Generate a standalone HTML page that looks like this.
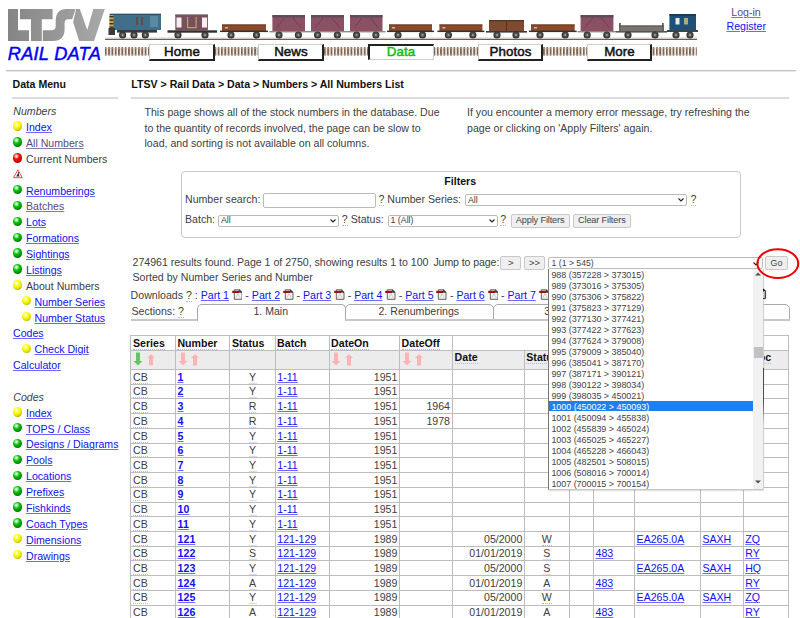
<!DOCTYPE html><html><head><meta charset="utf-8"><style>
html,body{margin:0;padding:0;background:#fff;width:800px;height:618px;overflow:hidden;position:relative;font-family:"Liberation Sans",sans-serif;}
.t{position:absolute;white-space:nowrap;}
.a{color:#1010f0;text-decoration:underline;text-decoration-color:#6a6aff;}
.ab{border-bottom:1px dotted #b4b4f4;}
.abs{position:absolute;}
</style></head><body>
<svg class="abs" style="left:0;top:0" width="110" height="44" viewBox="0 0 110 44">
<defs><linearGradient id="lg" gradientUnits="userSpaceOnUse" x1="8" y1="0" x2="105" y2="0"><stop offset="0" stop-color="#858585"/><stop offset="1" stop-color="#a9a9a9"/></linearGradient></defs>
<g fill="url(#lg)">
<path d="M8,9 H18 V30.3 H29 V41 H8 Z"/>
<path d="M20,9 H52.6 V19.2 H41.8 V41 H31 V19.2 H20 Z"/>
<path d="M42.8,30.3 H51.5 Q55.7,30.3 55.7,26 V21 Q55.7,9 66.4,9 H75.6 L72.2,19.2 H68 Q64.6,19.2 64.6,23 V29 Q64.6,41 53,41 H42.8 Z"/>
<path d="M76.1,9 H79.8 L87.3,30 L93.3,9 H104.8 L94,41 H79.2 L73.1,22 Z"/>
</g></svg>
<div class="t " style="left:7.80px;top:41.54px;font-size:18.2px;line-height:25.48px;font-weight:normal;font-style:italic;color:#0000f0;-webkit-text-stroke:0.45px #0000f0;letter-spacing:0.25px;">RAIL DATA</div>
<svg class="abs" style="left:0;top:0" width="800" height="44"><rect x="105" y="38.5" width="592" height="1.5" fill="#6e5e54"/><rect x="105" y="37.2" width="592" height="1.4" fill="#e6e2de"/><rect x="109.8" y="13.8" width="51.2" height="16.2" fill="#3f6f8a"/><rect x="109.8" y="13.8" width="51.2" height="1.2" fill="#2d5168"/><rect x="109.5" y="15" width="4" height="14" fill="#c9a040"/><rect x="109.5" y="16" width="4" height="1.4" fill="#333"/><rect x="109.5" y="19.5" width="4" height="1.4" fill="#333"/><rect x="109.5" y="23" width="4" height="1.4" fill="#333"/><rect x="109.5" y="26.5" width="4" height="1.4" fill="#333"/><rect x="136" y="17" width="2" height="8" fill="#6a4a40"/><rect x="141" y="17" width="2" height="8" fill="#6a4a40"/><rect x="150" y="16" width="8" height="11" fill="#5a8aa0"/><rect x="117" y="30" width="40" height="2.6" fill="#3a3a3a"/><rect x="108.5" y="28" width="6.5" height="7" fill="#3a3a3a"/><circle cx="122.6" cy="35" r="3.0" fill="#555" stroke="#333" stroke-width="1.2"/><circle cx="122.6" cy="35" r="0.9" fill="#aaa"/><circle cx="134" cy="35" r="3.0" fill="#555" stroke="#333" stroke-width="1.2"/><circle cx="134" cy="35" r="0.9" fill="#aaa"/><circle cx="145.3" cy="35" r="3.0" fill="#555" stroke="#333" stroke-width="1.2"/><circle cx="145.3" cy="35" r="0.9" fill="#aaa"/><rect x="175.3" y="14.6" width="32.6" height="15.7" fill="#7a4f5c"/><rect x="175.3" y="14.6" width="32.6" height="1.6" fill="#6a5a62"/><rect x="176.5" y="17.5" width="5" height="10" fill="#f4f0f0"/><rect x="202" y="17.5" width="5" height="10" fill="#f4f0f0"/><rect x="187" y="17" width="1.2" height="11" fill="#b8a860"/><rect x="195.5" y="17" width="1.2" height="11" fill="#b8a860"/><rect x="187" y="27" width="9.7" height="1.2" fill="#b8a860"/><rect x="167.5" y="30.3" width="49.5" height="2.4" fill="#2e2e2e"/><circle cx="178" cy="35.0" r="3.0" fill="#555" stroke="#333" stroke-width="1.2"/><circle cx="178" cy="35.0" r="0.9" fill="#aaa"/><circle cx="205" cy="35.0" r="3.0" fill="#555" stroke="#333" stroke-width="1.2"/><circle cx="205" cy="35.0" r="0.9" fill="#aaa"/><rect x="222" y="24.5" width="44" height="6.5" fill="#8b4a2c"/><rect x="222" y="24.5" width="44" height="1" fill="#6a3822"/><rect x="225" y="27.0" width="3" height="1.5" fill="#c8b8a8"/><rect x="220" y="30.6" width="48" height="1.5" fill="#2e3438"/><circle cx="231" cy="35.0" r="3.0" fill="#555" stroke="#333" stroke-width="1.2"/><circle cx="231" cy="35.0" r="0.9" fill="#aaa"/><circle cx="256.5" cy="35.0" r="3.0" fill="#555" stroke="#333" stroke-width="1.2"/><circle cx="256.5" cy="35.0" r="0.9" fill="#aaa"/><rect x="272.4" y="15" width="32.60000000000002" height="16" fill="#8b5064"/><rect x="272.4" y="15" width="32.60000000000002" height="2.5" fill="#5e4c5a"/><path d="M276.4,28 L284.4,18 M301,28 L293,18" stroke="#6a3a4a" stroke-width="0.8"/><rect x="269.4" y="31" width="38.60000000000002" height="1.4" fill="#8a8a8a"/><circle cx="279.0" cy="35.0" r="3.0" fill="#555" stroke="#333" stroke-width="1.2"/><circle cx="279.0" cy="35.0" r="0.9" fill="#aaa"/><circle cx="298.4" cy="35.0" r="3.0" fill="#555" stroke="#333" stroke-width="1.2"/><circle cx="298.4" cy="35.0" r="0.9" fill="#aaa"/><rect x="311" y="15" width="33" height="16" fill="#8b5064"/><rect x="311" y="15" width="33" height="2.5" fill="#5e4c5a"/><path d="M315,28 L323,18 M340,28 L332,18" stroke="#6a3a4a" stroke-width="0.8"/><rect x="308" y="31" width="39" height="1.4" fill="#8a8a8a"/><circle cx="317.6" cy="35.0" r="3.0" fill="#555" stroke="#333" stroke-width="1.2"/><circle cx="317.6" cy="35.0" r="0.9" fill="#aaa"/><circle cx="337.4" cy="35.0" r="3.0" fill="#555" stroke="#333" stroke-width="1.2"/><circle cx="337.4" cy="35.0" r="0.9" fill="#aaa"/><rect x="350" y="15" width="32.5" height="16" fill="#8b5064"/><rect x="350" y="15" width="32.5" height="2.5" fill="#5e4c5a"/><path d="M354,28 L362,18 M378.5,28 L370.5,18" stroke="#6a3a4a" stroke-width="0.8"/><rect x="347" y="31" width="38.5" height="1.4" fill="#8a8a8a"/><circle cx="356.6" cy="35.0" r="3.0" fill="#555" stroke="#333" stroke-width="1.2"/><circle cx="356.6" cy="35.0" r="0.9" fill="#aaa"/><circle cx="375.9" cy="35.0" r="3.0" fill="#555" stroke="#333" stroke-width="1.2"/><circle cx="375.9" cy="35.0" r="0.9" fill="#aaa"/><rect x="389" y="24.5" width="43" height="6.5" fill="#8b4a2c"/><rect x="389" y="24.5" width="43" height="1" fill="#6a3822"/><rect x="392" y="27.0" width="3" height="1.5" fill="#c8b8a8"/><rect x="387" y="30.6" width="47" height="1.5" fill="#2e3438"/><circle cx="398" cy="35.0" r="3.0" fill="#555" stroke="#333" stroke-width="1.2"/><circle cx="398" cy="35.0" r="0.9" fill="#aaa"/><circle cx="422.5" cy="35.0" r="3.0" fill="#555" stroke="#333" stroke-width="1.2"/><circle cx="422.5" cy="35.0" r="0.9" fill="#aaa"/><rect x="439.4" y="24.5" width="43.0" height="6.5" fill="#8b4a2c"/><rect x="439.4" y="24.5" width="43.0" height="1" fill="#6a3822"/><rect x="442.4" y="27.0" width="3" height="1.5" fill="#c8b8a8"/><rect x="437.4" y="30.6" width="47.0" height="1.5" fill="#2e3438"/><circle cx="448.4" cy="35.0" r="3.0" fill="#555" stroke="#333" stroke-width="1.2"/><circle cx="448.4" cy="35.0" r="0.9" fill="#aaa"/><circle cx="472.9" cy="35.0" r="3.0" fill="#555" stroke="#333" stroke-width="1.2"/><circle cx="472.9" cy="35.0" r="0.9" fill="#aaa"/><rect x="489" y="20" width="35" height="11" fill="#7e4a30"/><rect x="489" y="20" width="35" height="1.3" fill="#5a3422"/><rect x="506" y="21" width="1" height="10" fill="#5a3422"/><rect x="486" y="31" width="41" height="1.6" fill="#3a3a3a"/><circle cx="497" cy="35.0" r="3.0" fill="#555" stroke="#333" stroke-width="1.2"/><circle cx="497" cy="35.0" r="0.9" fill="#aaa"/><circle cx="516" cy="35.0" r="3.0" fill="#555" stroke="#333" stroke-width="1.2"/><circle cx="516" cy="35.0" r="0.9" fill="#aaa"/><rect x="531" y="24.5" width="43.700000000000045" height="6.5" fill="#8b4a2c"/><rect x="531" y="24.5" width="43.700000000000045" height="1" fill="#6a3822"/><rect x="534" y="27.0" width="3" height="1.5" fill="#c8b8a8"/><rect x="529" y="30.6" width="47.700000000000045" height="1.5" fill="#2e3438"/><circle cx="540" cy="35.0" r="3.0" fill="#555" stroke="#333" stroke-width="1.2"/><circle cx="540" cy="35.0" r="0.9" fill="#aaa"/><circle cx="565.2" cy="35.0" r="3.0" fill="#555" stroke="#333" stroke-width="1.2"/><circle cx="565.2" cy="35.0" r="0.9" fill="#aaa"/><rect x="580.6" y="15" width="32.799999999999955" height="16" fill="#8b5064"/><rect x="580.6" y="15" width="32.799999999999955" height="2.5" fill="#5e4c5a"/><path d="M584.6,28 L592.6,18 M609.4,28 L601.4,18" stroke="#6a3a4a" stroke-width="0.8"/><rect x="577.6" y="31" width="38.799999999999955" height="1.4" fill="#8a8a8a"/><circle cx="587.2" cy="35.0" r="3.0" fill="#555" stroke="#333" stroke-width="1.2"/><circle cx="587.2" cy="35.0" r="0.9" fill="#aaa"/><circle cx="606.8" cy="35.0" r="3.0" fill="#555" stroke="#333" stroke-width="1.2"/><circle cx="606.8" cy="35.0" r="0.9" fill="#aaa"/><rect x="619" y="25.5" width="45" height="5.5" fill="#7a7470"/><rect x="619" y="23" width="1.8" height="8" fill="#6a6460"/><rect x="662" y="23" width="1.8" height="8" fill="#6a6460"/><rect x="619" y="25.5" width="45" height="1" fill="#5a5450"/><rect x="616" y="31" width="51" height="1.6" fill="#555"/><circle cx="628" cy="35.0" r="3.0" fill="#555" stroke="#333" stroke-width="1.2"/><circle cx="628" cy="35.0" r="0.9" fill="#aaa"/><circle cx="655" cy="35.0" r="3.0" fill="#555" stroke="#333" stroke-width="1.2"/><circle cx="655" cy="35.0" r="0.9" fill="#aaa"/><rect x="669.4" y="14" width="26.6" height="16" fill="#1f5078"/><rect x="669.4" y="14" width="26.6" height="1.6" fill="#163a55"/><rect x="675.5" y="18" width="4" height="6.5" fill="#e8e8e8"/><rect x="684" y="18" width="4" height="6.5" fill="#b8a878"/><rect x="667" y="30" width="31" height="2" fill="#444"/><circle cx="676" cy="35.0" r="3.0" fill="#555" stroke="#333" stroke-width="1.2"/><circle cx="676" cy="35.0" r="0.9" fill="#aaa"/><circle cx="690" cy="35.0" r="3.0" fill="#555" stroke="#333" stroke-width="1.2"/><circle cx="690" cy="35.0" r="0.9" fill="#aaa"/></svg>
<svg class="abs" style="left:0;top:40" width="800" height="20">
<defs><pattern id="sl" x="104.8" y="0" width="3.32" height="20" patternUnits="userSpaceOnUse"><rect x="0" y="7" width="1.9" height="8.7" rx="0.8" fill="#7e6450"/></pattern></defs>
<rect x="104.8" y="0" width="592" height="20" fill="url(#sl)"/>
<rect x="104.8" y="8" width="592" height="0.8" fill="#c8b8a8" opacity="0.6"/>
<rect x="104.8" y="14" width="592" height="0.8" fill="#c8b8a8" opacity="0.6"/>
</svg>
<div class="abs" style="left:149px;top:43.8px;width:63px;height:14px;background:#fff;border-top:1px solid #ccc;border-left:1px solid #ccc;border-right:2px solid #222;border-bottom:2px solid #222;"></div>
<div class="t " style="left:182.00px;top:42.67px;font-size:13.3px;line-height:18.62px;font-weight:normal;font-style:normal;color:#111;transform:translateX(-50%);-webkit-text-stroke:0.5px #111;letter-spacing:0.1px;">Home</div>
<div class="abs" style="left:258px;top:43.8px;width:63px;height:14px;background:#fff;border-top:1px solid #ccc;border-left:1px solid #ccc;border-right:2px solid #222;border-bottom:2px solid #222;"></div>
<div class="t " style="left:291.00px;top:42.67px;font-size:13.3px;line-height:18.62px;font-weight:normal;font-style:normal;color:#111;transform:translateX(-50%);-webkit-text-stroke:0.5px #111;letter-spacing:0.1px;">News</div>
<div class="abs" style="left:368px;top:43.5px;width:63px;height:13.6px;background:#fff;border-top:2px solid #222;border-left:2px solid #222;border-right:1px solid #ccc;border-bottom:1px solid #ccc;"></div>
<div class="t " style="left:401.00px;top:42.67px;font-size:13.3px;line-height:18.62px;font-weight:normal;font-style:normal;color:#10c010;transform:translateX(-50%);-webkit-text-stroke:0.5px #10c010;letter-spacing:0.1px;">Data</div>
<div class="abs" style="left:478px;top:43.8px;width:62px;height:14px;background:#fff;border-top:1px solid #ccc;border-left:1px solid #ccc;border-right:2px solid #222;border-bottom:2px solid #222;"></div>
<div class="t " style="left:510.50px;top:42.67px;font-size:13.3px;line-height:18.62px;font-weight:normal;font-style:normal;color:#111;transform:translateX(-50%);-webkit-text-stroke:0.5px #111;letter-spacing:0.1px;">Photos</div>
<div class="abs" style="left:587px;top:43.8px;width:62px;height:14px;background:#fff;border-top:1px solid #ccc;border-left:1px solid #ccc;border-right:2px solid #222;border-bottom:2px solid #222;"></div>
<div class="t " style="left:619.50px;top:42.67px;font-size:13.3px;line-height:18.62px;font-weight:normal;font-style:normal;color:#111;transform:translateX(-50%);-webkit-text-stroke:0.5px #111;letter-spacing:0.1px;">More</div>
<div class="t " style="left:731.30px;top:5.40px;font-size:10.6px;line-height:14.84px;font-weight:normal;font-style:normal;color:#404040;"><span class="a" style="color:#584a80;text-decoration-color:#8a7aa8">Log-in</span></div>
<div class="t " style="left:726.50px;top:19.10px;font-size:10.6px;line-height:14.84px;font-weight:normal;font-style:normal;color:#404040;"><span class="a">Register</span></div>
<div class="abs" style="left:6px;top:70px;width:790px;height:1px;background:#c4c4c4"></div>
<div class="abs" style="left:6px;top:71px;width:790px;height:1px;background:#e8e8e8"></div>
<div class="abs" style="left:12px;top:97px;width:106px;height:2px;background:#dcdcdc"></div>
<div class="abs" style="left:131px;top:97px;width:658px;height:2px;background:#dcdcdc"></div>
<div class="t " style="left:12.50px;top:76.70px;font-size:10.6px;line-height:14.84px;font-weight:bold;font-style:normal;color:#111;">Data Menu</div>
<div class="t " style="left:131.30px;top:76.70px;font-size:10.6px;line-height:14.84px;font-weight:bold;font-style:normal;color:#111;">LTSV &gt; Rail Data &gt; Data &gt; Numbers &gt; All Numbers List</div>
<div class="t " style="left:13.30px;top:104.20px;font-size:10.6px;line-height:14.84px;font-weight:normal;font-style:normal;color:#404040;"><i>Numbers</i></div>
<div class="abs" style="left:12.9px;top:121.47px;width:9.4px;height:9.4px;border-radius:50%;background:radial-gradient(circle at 38% 32%, #fff 0, #ffffb0 10%, #ffff00 35%, #d8d800 65%, #6a6a00 100%)"></div>
<div class="t " style="left:26.00px;top:120.07px;font-size:10.6px;line-height:14.84px;font-weight:normal;font-style:normal;color:#404040;"><span class="a">Index</span></div>
<div class="abs" style="left:12.9px;top:137.34px;width:9.4px;height:9.4px;border-radius:50%;background:radial-gradient(circle at 38% 32%, #fff 0, #b0ffb0 10%, #10c010 35%, #009000 65%, #003000 100%)"></div>
<div class="t " style="left:26.00px;top:135.94px;font-size:10.6px;line-height:14.84px;font-weight:normal;font-style:normal;color:#404040;"><span class="a" style="color:#584a80;text-decoration-color:#8a7aa8">All Numbers</span></div>
<div class="abs" style="left:12.9px;top:153.21px;width:9.4px;height:9.4px;border-radius:50%;background:radial-gradient(circle at 38% 32%, #fff 0, #ffc0c0 10%, #ff0000 35%, #d00000 65%, #500000 100%)"></div>
<div class="t " style="left:26.00px;top:151.81px;font-size:10.6px;line-height:14.84px;font-weight:normal;font-style:normal;color:#404040;">Current Numbers</div>
<svg class="abs" style="left:12.6px;top:168.58px" width="10" height="10" viewBox="0 0 10 10"><path d="M4.9,0.8 L9.3,8.7 H0.5 Z" fill="#fff" stroke="#f03a3a" stroke-width="0.9" stroke-linejoin="round"/><path d="M3.2,7.6 L5.4,3.6 L6.6,7.6 Z" fill="#333"/><circle cx="5.6" cy="3.6" r="0.7" fill="#333"/></svg>
<div class="abs" style="left:12.9px;top:184.95px;width:9.4px;height:9.4px;border-radius:50%;background:radial-gradient(circle at 38% 32%, #fff 0, #b0ffb0 10%, #10c010 35%, #009000 65%, #003000 100%)"></div>
<div class="t " style="left:26.00px;top:183.55px;font-size:10.6px;line-height:14.84px;font-weight:normal;font-style:normal;color:#404040;"><span class="a">Renumberings</span></div>
<div class="abs" style="left:12.9px;top:200.82px;width:9.4px;height:9.4px;border-radius:50%;background:radial-gradient(circle at 38% 32%, #fff 0, #b0ffb0 10%, #10c010 35%, #009000 65%, #003000 100%)"></div>
<div class="t " style="left:26.00px;top:199.42px;font-size:10.6px;line-height:14.84px;font-weight:normal;font-style:normal;color:#404040;"><span class="a" style="color:#584a80;text-decoration-color:#8a7aa8">Batches</span></div>
<div class="abs" style="left:12.9px;top:216.69px;width:9.4px;height:9.4px;border-radius:50%;background:radial-gradient(circle at 38% 32%, #fff 0, #b0ffb0 10%, #10c010 35%, #009000 65%, #003000 100%)"></div>
<div class="t " style="left:26.00px;top:215.29px;font-size:10.6px;line-height:14.84px;font-weight:normal;font-style:normal;color:#404040;"><span class="a">Lots</span></div>
<div class="abs" style="left:12.9px;top:232.56px;width:9.4px;height:9.4px;border-radius:50%;background:radial-gradient(circle at 38% 32%, #fff 0, #b0ffb0 10%, #10c010 35%, #009000 65%, #003000 100%)"></div>
<div class="t " style="left:26.00px;top:231.16px;font-size:10.6px;line-height:14.84px;font-weight:normal;font-style:normal;color:#404040;"><span class="a">Formations</span></div>
<div class="abs" style="left:12.9px;top:248.43px;width:9.4px;height:9.4px;border-radius:50%;background:radial-gradient(circle at 38% 32%, #fff 0, #b0ffb0 10%, #10c010 35%, #009000 65%, #003000 100%)"></div>
<div class="t " style="left:26.00px;top:247.03px;font-size:10.6px;line-height:14.84px;font-weight:normal;font-style:normal;color:#404040;"><span class="a">Sightings</span></div>
<div class="abs" style="left:12.9px;top:264.30px;width:9.4px;height:9.4px;border-radius:50%;background:radial-gradient(circle at 38% 32%, #fff 0, #b0ffb0 10%, #10c010 35%, #009000 65%, #003000 100%)"></div>
<div class="t " style="left:26.00px;top:262.90px;font-size:10.6px;line-height:14.84px;font-weight:normal;font-style:normal;color:#404040;"><span class="a">Listings</span></div>
<div class="abs" style="left:12.9px;top:280.17px;width:9.4px;height:9.4px;border-radius:50%;background:radial-gradient(circle at 38% 32%, #fff 0, #ffffb0 10%, #ffff00 35%, #d8d800 65%, #6a6a00 100%)"></div>
<div class="t " style="left:26.00px;top:278.77px;font-size:10.6px;line-height:14.84px;font-weight:normal;font-style:normal;color:#404040;">About Numbers</div>
<div class="abs" style="left:22px;top:296.04px;width:9.4px;height:9.4px;border-radius:50%;background:radial-gradient(circle at 38% 32%, #fff 0, #ffffb0 10%, #ffff00 35%, #d8d800 65%, #6a6a00 100%)"></div>
<div class="t " style="left:34.50px;top:294.64px;font-size:10.6px;line-height:14.84px;font-weight:normal;font-style:normal;color:#404040;"><span class="a">Number Series</span></div>
<div class="abs" style="left:22px;top:311.91px;width:9.4px;height:9.4px;border-radius:50%;background:radial-gradient(circle at 38% 32%, #fff 0, #ffffb0 10%, #ffff00 35%, #d8d800 65%, #6a6a00 100%)"></div>
<div class="t " style="left:34.50px;top:310.51px;font-size:10.6px;line-height:14.84px;font-weight:normal;font-style:normal;color:#404040;"><span class="a">Number Status</span></div>
<div class="t " style="left:13.00px;top:326.38px;font-size:10.6px;line-height:14.84px;font-weight:normal;font-style:normal;color:#404040;"><span class="a">Codes</span></div>
<div class="abs" style="left:22px;top:343.65px;width:9.4px;height:9.4px;border-radius:50%;background:radial-gradient(circle at 38% 32%, #fff 0, #ffffb0 10%, #ffff00 35%, #d8d800 65%, #6a6a00 100%)"></div>
<div class="t " style="left:34.50px;top:342.25px;font-size:10.6px;line-height:14.84px;font-weight:normal;font-style:normal;color:#404040;"><span class="a">Check Digit</span></div>
<div class="t " style="left:13.00px;top:358.12px;font-size:10.6px;line-height:14.84px;font-weight:normal;font-style:normal;color:#404040;"><span class="a">Calculator</span></div>
<div class="t " style="left:13.30px;top:389.86px;font-size:10.6px;line-height:14.84px;font-weight:normal;font-style:normal;color:#404040;"><i>Codes</i></div>
<div class="abs" style="left:12.9px;top:407.13px;width:9.4px;height:9.4px;border-radius:50%;background:radial-gradient(circle at 38% 32%, #fff 0, #ffffb0 10%, #ffff00 35%, #d8d800 65%, #6a6a00 100%)"></div>
<div class="t " style="left:26.00px;top:405.73px;font-size:10.6px;line-height:14.84px;font-weight:normal;font-style:normal;color:#404040;"><span class="a">Index</span></div>
<div class="abs" style="left:12.9px;top:423.00px;width:9.4px;height:9.4px;border-radius:50%;background:radial-gradient(circle at 38% 32%, #fff 0, #b0ffb0 10%, #10c010 35%, #009000 65%, #003000 100%)"></div>
<div class="t " style="left:26.00px;top:421.60px;font-size:10.6px;line-height:14.84px;font-weight:normal;font-style:normal;color:#404040;"><span class="a">TOPS / Class</span></div>
<div class="abs" style="left:12.9px;top:438.87px;width:9.4px;height:9.4px;border-radius:50%;background:radial-gradient(circle at 38% 32%, #fff 0, #b0ffb0 10%, #10c010 35%, #009000 65%, #003000 100%)"></div>
<div class="t " style="left:26.00px;top:437.47px;font-size:10.6px;line-height:14.84px;font-weight:normal;font-style:normal;color:#404040;"><span class="a">Designs / Diagrams</span></div>
<div class="abs" style="left:12.9px;top:454.74px;width:9.4px;height:9.4px;border-radius:50%;background:radial-gradient(circle at 38% 32%, #fff 0, #b0ffb0 10%, #10c010 35%, #009000 65%, #003000 100%)"></div>
<div class="t " style="left:26.00px;top:453.34px;font-size:10.6px;line-height:14.84px;font-weight:normal;font-style:normal;color:#404040;"><span class="a">Pools</span></div>
<div class="abs" style="left:12.9px;top:470.61px;width:9.4px;height:9.4px;border-radius:50%;background:radial-gradient(circle at 38% 32%, #fff 0, #b0ffb0 10%, #10c010 35%, #009000 65%, #003000 100%)"></div>
<div class="t " style="left:26.00px;top:469.21px;font-size:10.6px;line-height:14.84px;font-weight:normal;font-style:normal;color:#404040;"><span class="a">Locations</span></div>
<div class="abs" style="left:12.9px;top:486.48px;width:9.4px;height:9.4px;border-radius:50%;background:radial-gradient(circle at 38% 32%, #fff 0, #b0ffb0 10%, #10c010 35%, #009000 65%, #003000 100%)"></div>
<div class="t " style="left:26.00px;top:485.08px;font-size:10.6px;line-height:14.84px;font-weight:normal;font-style:normal;color:#404040;"><span class="a">Prefixes</span></div>
<div class="abs" style="left:12.9px;top:502.35px;width:9.4px;height:9.4px;border-radius:50%;background:radial-gradient(circle at 38% 32%, #fff 0, #b0ffb0 10%, #10c010 35%, #009000 65%, #003000 100%)"></div>
<div class="t " style="left:26.00px;top:500.95px;font-size:10.6px;line-height:14.84px;font-weight:normal;font-style:normal;color:#404040;"><span class="a">Fishkinds</span></div>
<div class="abs" style="left:12.9px;top:518.22px;width:9.4px;height:9.4px;border-radius:50%;background:radial-gradient(circle at 38% 32%, #fff 0, #b0ffb0 10%, #10c010 35%, #009000 65%, #003000 100%)"></div>
<div class="t " style="left:26.00px;top:516.82px;font-size:10.6px;line-height:14.84px;font-weight:normal;font-style:normal;color:#404040;"><span class="a">Coach Types</span></div>
<div class="abs" style="left:12.9px;top:534.09px;width:9.4px;height:9.4px;border-radius:50%;background:radial-gradient(circle at 38% 32%, #fff 0, #ffffb0 10%, #ffff00 35%, #d8d800 65%, #6a6a00 100%)"></div>
<div class="t " style="left:26.00px;top:532.69px;font-size:10.6px;line-height:14.84px;font-weight:normal;font-style:normal;color:#404040;"><span class="a">Dimensions</span></div>
<div class="abs" style="left:12.9px;top:549.96px;width:9.4px;height:9.4px;border-radius:50%;background:radial-gradient(circle at 38% 32%, #fff 0, #ffffb0 10%, #ffff00 35%, #d8d800 65%, #6a6a00 100%)"></div>
<div class="t " style="left:26.00px;top:548.56px;font-size:10.6px;line-height:14.84px;font-weight:normal;font-style:normal;color:#404040;"><span class="a">Drawings</span></div>
<div class="t " style="left:144.50px;top:104.70px;font-size:10.6px;line-height:14.84px;font-weight:normal;font-style:normal;color:#404040;">This page shows all of the stock numbers in the database. Due</div>
<div class="t " style="left:144.50px;top:120.55px;font-size:10.6px;line-height:14.84px;font-weight:normal;font-style:normal;color:#404040;">to the quantity of records involved, the page can be slow to</div>
<div class="t " style="left:144.50px;top:136.40px;font-size:10.6px;line-height:14.84px;font-weight:normal;font-style:normal;color:#404040;">load, and sorting is not available on all columns.</div>
<div class="t " style="left:467.00px;top:104.70px;font-size:10.6px;line-height:14.84px;font-weight:normal;font-style:normal;color:#404040;">If you encounter a memory error message, try refreshing the</div>
<div class="t " style="left:467.00px;top:120.55px;font-size:10.6px;line-height:14.84px;font-weight:normal;font-style:normal;color:#404040;">page or clicking on 'Apply Filters' again.</div>
<div class="abs" style="left:180.5px;top:171px;width:558px;height:65px;border:1px solid #c8c8c8;border-radius:4px"></div>
<div class="t " style="left:444.30px;top:173.70px;font-size:10.6px;line-height:14.84px;font-weight:bold;font-style:normal;color:#111;">Filters</div>
<div class="t " style="left:185.00px;top:191.70px;font-size:10.6px;line-height:14.84px;font-weight:normal;font-style:normal;color:#404040;">Number search:</div>
<div class="abs" style="left:262.5px;top:193px;width:111px;height:12.5px;border:1px solid #bbb;border-radius:2px"></div>
<div class="t " style="left:378.50px;top:191.70px;font-size:10.6px;line-height:14.84px;font-weight:normal;font-style:normal;color:#404040;"><span class="ab">?</span> Number Series:</div>
<div class="abs" style="left:465px;top:193.9px;width:220px;height:10.099999999999994px;border:1px solid #bbb;border-radius:2px;background:#fff"></div>
<div class="t " style="left:468.00px;top:193.59px;font-size:8.8px;line-height:12.32px;font-weight:normal;font-style:normal;color:#404040;">All</div>
<svg class="abs" style="left:678px;top:197.9px" width="6" height="4" viewBox="0 0 6 4"><path d="M0.5,0.5 L3,3 L5.5,0.5" fill="none" stroke="#222" stroke-width="1.1"/></svg>
<div class="t " style="left:690.50px;top:191.70px;font-size:10.6px;line-height:14.84px;font-weight:normal;font-style:normal;color:#404040;"><span class="ab">?</span></div>
<div class="t " style="left:185.00px;top:212.40px;font-size:10.6px;line-height:14.84px;font-weight:normal;font-style:normal;color:#404040;">Batch:</div>
<div class="abs" style="left:218px;top:215px;width:119px;height:9.5px;border:1px solid #bbb;border-radius:2px;background:#fff"></div>
<div class="t " style="left:221.00px;top:214.09px;font-size:8.8px;line-height:12.32px;font-weight:normal;font-style:normal;color:#404040;">All</div>
<svg class="abs" style="left:330px;top:218.8px" width="6" height="4" viewBox="0 0 6 4"><path d="M0.5,0.5 L3,3 L5.5,0.5" fill="none" stroke="#222" stroke-width="1.1"/></svg>
<div class="t " style="left:341.80px;top:212.40px;font-size:10.6px;line-height:14.84px;font-weight:normal;font-style:normal;color:#404040;"><span class="ab">?</span> Status:</div>
<div class="abs" style="left:387.5px;top:215px;width:108.0px;height:9.5px;border:1px solid #bbb;border-radius:2px;background:#fff"></div>
<div class="t " style="left:390.50px;top:214.09px;font-size:8.8px;line-height:12.32px;font-weight:normal;font-style:normal;color:#404040;">1 (All)</div>
<svg class="abs" style="left:488.5px;top:218.8px" width="6" height="4" viewBox="0 0 6 4"><path d="M0.5,0.5 L3,3 L5.5,0.5" fill="none" stroke="#222" stroke-width="1.1"/></svg>
<div class="t " style="left:500.30px;top:212.40px;font-size:10.6px;line-height:14.84px;font-weight:normal;font-style:normal;color:#404040;"><span class="ab">?</span></div>
<div class="abs" style="left:510.5px;top:213.5px;width:57.299999999999955px;height:12.0px;border:1px solid #c8c8c8;border-radius:2px;background:#efefef"></div>
<div class="t " style="left:540.15px;top:214.17px;font-size:9.2px;line-height:12.88px;font-weight:normal;font-style:normal;color:#444;transform:translateX(-50%);letter-spacing:-0.15px;">Apply Filters</div>
<div class="abs" style="left:573px;top:213.5px;width:55.60000000000002px;height:12.0px;border:1px solid #c8c8c8;border-radius:2px;background:#efefef"></div>
<div class="t " style="left:601.80px;top:214.17px;font-size:9.2px;line-height:12.88px;font-weight:normal;font-style:normal;color:#444;transform:translateX(-50%);letter-spacing:-0.15px;">Clear Filters</div>
<div class="t " style="left:132.50px;top:254.80px;font-size:10.6px;line-height:14.84px;font-weight:normal;font-style:normal;color:#404040;letter-spacing:-0.015px;">274961 results found. Page 1 of 2750, showing results 1 to 100</div>
<div class="t " style="left:433.40px;top:254.80px;font-size:10.6px;line-height:14.84px;font-weight:normal;font-style:normal;color:#404040;letter-spacing:-0.1px;">Jump to page:</div>
<div class="abs" style="left:500.3px;top:256.2px;width:18.599999999999966px;height:12.199999999999989px;border:1px solid #c8c8c8;border-radius:2px;background:#efefef"></div>
<div class="t " style="left:510.60px;top:256.35px;font-size:9.5px;line-height:13.3px;font-weight:normal;font-style:normal;color:#404040;transform:translateX(-50%);letter-spacing:-0.15px;">&gt;</div>
<div class="abs" style="left:524.3px;top:256.2px;width:18.40000000000009px;height:12.199999999999989px;border:1px solid #c8c8c8;border-radius:2px;background:#efefef"></div>
<div class="t " style="left:534.50px;top:256.35px;font-size:9.5px;line-height:13.3px;font-weight:normal;font-style:normal;color:#404040;transform:translateX(-50%);letter-spacing:-0.15px;">&gt;&gt;</div>
<div class="abs" style="left:548.2px;top:257.3px;width:212.5px;height:9.6px;border:1px solid #bbb;border-radius:2px;background:#fff"></div>
<div class="t " style="left:551.50px;top:256.79px;font-size:8.7px;line-height:12.18px;font-weight:normal;font-style:normal;color:#444;">1 (1 &gt; 545)</div>
<svg class="abs" style="left:753px;top:261.5px" width="6" height="4" viewBox="0 0 6 4"><path d="M0.5,0.5 L3,3 L5.5,0.5" fill="none" stroke="#222" stroke-width="1.1"/></svg>
<div class="abs" style="left:765.3px;top:256.2px;width:20.5px;height:12.199999999999989px;border:1px solid #c8c8c8;border-radius:2px;background:#efefef"></div>
<div class="t " style="left:776.55px;top:256.69px;font-size:8.8px;line-height:12.32px;font-weight:normal;font-style:normal;color:#444;transform:translateX(-50%);letter-spacing:0.1px;">Go</div>
<div class="t " style="left:132.50px;top:270.20px;font-size:10.6px;line-height:14.84px;font-weight:normal;font-style:normal;color:#404040;">Sorted by Number Series and Number</div>
<div class="t " style="left:130.60px;top:287.90px;font-size:10.6px;line-height:14.84px;font-weight:normal;font-style:normal;color:#404040;">Downloads <span class="ab">?</span> : <span class="a">Part 1</span> <svg width="10.5" height="11" viewBox="0 0 10.5 11" style="vertical-align:-1px;margin-left:0px"><path d="M2.3,0.8 H7.6 L10,3.2 V10.3 H2.3 Z" fill="#f4f4f4" stroke="#505050" stroke-width="0.9"/><path d="M7.4,0.8 V3.3 H10" fill="#333" stroke="#333" stroke-width="0.8"/><rect x="0.2" y="1.8" width="7" height="2.2" fill="#a01010"/><path d="M3.8,9 L6,4.5 L8.3,9" fill="none" stroke="#caa" stroke-width="0.6"/></svg> - <span class="a">Part 2</span> <svg width="10.5" height="11" viewBox="0 0 10.5 11" style="vertical-align:-1px;margin-left:0px"><path d="M2.3,0.8 H7.6 L10,3.2 V10.3 H2.3 Z" fill="#f4f4f4" stroke="#505050" stroke-width="0.9"/><path d="M7.4,0.8 V3.3 H10" fill="#333" stroke="#333" stroke-width="0.8"/><rect x="0.2" y="1.8" width="7" height="2.2" fill="#a01010"/><path d="M3.8,9 L6,4.5 L8.3,9" fill="none" stroke="#caa" stroke-width="0.6"/></svg> - <span class="a">Part 3</span> <svg width="10.5" height="11" viewBox="0 0 10.5 11" style="vertical-align:-1px;margin-left:0px"><path d="M2.3,0.8 H7.6 L10,3.2 V10.3 H2.3 Z" fill="#f4f4f4" stroke="#505050" stroke-width="0.9"/><path d="M7.4,0.8 V3.3 H10" fill="#333" stroke="#333" stroke-width="0.8"/><rect x="0.2" y="1.8" width="7" height="2.2" fill="#a01010"/><path d="M3.8,9 L6,4.5 L8.3,9" fill="none" stroke="#caa" stroke-width="0.6"/></svg> - <span class="a">Part 4</span> <svg width="10.5" height="11" viewBox="0 0 10.5 11" style="vertical-align:-1px;margin-left:0px"><path d="M2.3,0.8 H7.6 L10,3.2 V10.3 H2.3 Z" fill="#f4f4f4" stroke="#505050" stroke-width="0.9"/><path d="M7.4,0.8 V3.3 H10" fill="#333" stroke="#333" stroke-width="0.8"/><rect x="0.2" y="1.8" width="7" height="2.2" fill="#a01010"/><path d="M3.8,9 L6,4.5 L8.3,9" fill="none" stroke="#caa" stroke-width="0.6"/></svg> - <span class="a">Part 5</span> <svg width="10.5" height="11" viewBox="0 0 10.5 11" style="vertical-align:-1px;margin-left:0px"><path d="M2.3,0.8 H7.6 L10,3.2 V10.3 H2.3 Z" fill="#f4f4f4" stroke="#505050" stroke-width="0.9"/><path d="M7.4,0.8 V3.3 H10" fill="#333" stroke="#333" stroke-width="0.8"/><rect x="0.2" y="1.8" width="7" height="2.2" fill="#a01010"/><path d="M3.8,9 L6,4.5 L8.3,9" fill="none" stroke="#caa" stroke-width="0.6"/></svg> - <span class="a">Part 6</span> <svg width="10.5" height="11" viewBox="0 0 10.5 11" style="vertical-align:-1px;margin-left:0px"><path d="M2.3,0.8 H7.6 L10,3.2 V10.3 H2.3 Z" fill="#f4f4f4" stroke="#505050" stroke-width="0.9"/><path d="M7.4,0.8 V3.3 H10" fill="#333" stroke="#333" stroke-width="0.8"/><rect x="0.2" y="1.8" width="7" height="2.2" fill="#a01010"/><path d="M3.8,9 L6,4.5 L8.3,9" fill="none" stroke="#caa" stroke-width="0.6"/></svg> - <span class="a">Part 7</span> <svg width="10.5" height="11" viewBox="0 0 10.5 11" style="vertical-align:-1px;margin-left:0px"><path d="M2.3,0.8 H7.6 L10,3.2 V10.3 H2.3 Z" fill="#f4f4f4" stroke="#505050" stroke-width="0.9"/><path d="M7.4,0.8 V3.3 H10" fill="#333" stroke="#333" stroke-width="0.8"/><rect x="0.2" y="1.8" width="7" height="2.2" fill="#a01010"/><path d="M3.8,9 L6,4.5 L8.3,9" fill="none" stroke="#caa" stroke-width="0.6"/></svg> - <span class="a">Part 8</span> <svg width="10.5" height="11" viewBox="0 0 10.5 11" style="vertical-align:-1px;margin-left:0px"><path d="M2.3,0.8 H7.6 L10,3.2 V10.3 H2.3 Z" fill="#f4f4f4" stroke="#505050" stroke-width="0.9"/><path d="M7.4,0.8 V3.3 H10" fill="#333" stroke="#333" stroke-width="0.8"/><rect x="0.2" y="1.8" width="7" height="2.2" fill="#a01010"/><path d="M3.8,9 L6,4.5 L8.3,9" fill="none" stroke="#caa" stroke-width="0.6"/></svg> - <span class="a">Part 9</span> <svg width="10.5" height="11" viewBox="0 0 10.5 11" style="vertical-align:-1px;margin-left:0px"><path d="M2.3,0.8 H7.6 L10,3.2 V10.3 H2.3 Z" fill="#f4f4f4" stroke="#505050" stroke-width="0.9"/><path d="M7.4,0.8 V3.3 H10" fill="#333" stroke="#333" stroke-width="0.8"/><rect x="0.2" y="1.8" width="7" height="2.2" fill="#a01010"/><path d="M3.8,9 L6,4.5 L8.3,9" fill="none" stroke="#caa" stroke-width="0.6"/></svg> - <span class="a">Part 10</span> <svg width="10.5" height="11" viewBox="0 0 10.5 11" style="vertical-align:-1px;margin-left:0px"><path d="M2.3,0.8 H7.6 L10,3.2 V10.3 H2.3 Z" fill="#f4f4f4" stroke="#505050" stroke-width="0.9"/><path d="M7.4,0.8 V3.3 H10" fill="#333" stroke="#333" stroke-width="0.8"/><rect x="0.2" y="1.8" width="7" height="2.2" fill="#a01010"/><path d="M3.8,9 L6,4.5 L8.3,9" fill="none" stroke="#caa" stroke-width="0.6"/></svg> - <span class="a">Part 11</span> <svg width="10.5" height="11" viewBox="0 0 10.5 11" style="vertical-align:-1px;margin-left:0px"><path d="M2.3,0.8 H7.6 L10,3.2 V10.3 H2.3 Z" fill="#f4f4f4" stroke="#505050" stroke-width="0.9"/><path d="M7.4,0.8 V3.3 H10" fill="#333" stroke="#333" stroke-width="0.8"/><rect x="0.2" y="1.8" width="7" height="2.2" fill="#a01010"/><path d="M3.8,9 L6,4.5 L8.3,9" fill="none" stroke="#caa" stroke-width="0.6"/></svg></div>
<div class="t " style="left:131.50px;top:304.10px;font-size:10.6px;line-height:14.84px;font-weight:normal;font-style:normal;color:#404040;">Sections: <span class="ab">?</span></div>
<div class="abs" style="left:131px;top:319.3px;width:66px;height:1.5px;background:#c8c8c8"></div>
<div class="abs" style="left:196.5px;top:303.5px;width:147.5px;height:16px;border:1px solid #a8a8a8;border-radius:5px 5px 0 0;border-bottom:none;background:#fff"></div>
<div class="t " style="left:270.75px;top:304.10px;font-size:10.6px;line-height:14.84px;font-weight:normal;font-style:normal;color:#404040;transform:translateX(-50%);">1. Main</div>
<div class="abs" style="left:345px;top:303.5px;width:146.60000000000002px;height:15px;border:1px solid #a8a8a8;border-radius:5px 5px 0 0;background:#fff"></div>
<div class="abs" style="left:345px;top:319.3px;width:148.60000000000002px;height:1.5px;background:#c8c8c8"></div>
<div class="t " style="left:418.80px;top:304.10px;font-size:10.6px;line-height:14.84px;font-weight:normal;font-style:normal;color:#404040;transform:translateX(-50%);">2. Renumberings</div>
<div class="abs" style="left:492.6px;top:303.5px;width:295.6px;height:15px;border:1px solid #a8a8a8;border-radius:5px 5px 0 0;background:#fff"></div>
<div class="abs" style="left:492.6px;top:319.3px;width:297.6px;height:1.5px;background:#c8c8c8"></div>
<div class="t " style="left:544.20px;top:304.10px;font-size:10.6px;line-height:14.84px;font-weight:normal;font-style:normal;color:#404040;">3. Other</div>
<div class="abs" style="left:130px;top:350px;width:659px;height:19px;background:#ececec"></div>
<div class="abs" style="left:130px;top:335px;width:659px;height:1px;background:#bdbdbd"></div>
<div class="abs" style="left:130px;top:350px;width:659px;height:1px;background:#bdbdbd"></div>
<div class="abs" style="left:130px;top:369px;width:659px;height:1px;background:#bdbdbd"></div>
<div class="abs" style="left:130px;top:384px;width:659px;height:1px;background:#bdbdbd"></div>
<div class="abs" style="left:130px;top:398px;width:659px;height:1px;background:#bdbdbd"></div>
<div class="abs" style="left:130px;top:413px;width:659px;height:1px;background:#bdbdbd"></div>
<div class="abs" style="left:130px;top:428px;width:659px;height:1px;background:#bdbdbd"></div>
<div class="abs" style="left:130px;top:443px;width:659px;height:1px;background:#bdbdbd"></div>
<div class="abs" style="left:130px;top:457px;width:659px;height:1px;background:#bdbdbd"></div>
<div class="abs" style="left:130px;top:472px;width:659px;height:1px;background:#bdbdbd"></div>
<div class="abs" style="left:130px;top:487px;width:659px;height:1px;background:#bdbdbd"></div>
<div class="abs" style="left:130px;top:502px;width:659px;height:1px;background:#bdbdbd"></div>
<div class="abs" style="left:130px;top:516px;width:659px;height:1px;background:#bdbdbd"></div>
<div class="abs" style="left:130px;top:531px;width:659px;height:1px;background:#bdbdbd"></div>
<div class="abs" style="left:130px;top:546px;width:659px;height:1px;background:#bdbdbd"></div>
<div class="abs" style="left:130px;top:560px;width:659px;height:1px;background:#bdbdbd"></div>
<div class="abs" style="left:130px;top:575px;width:659px;height:1px;background:#bdbdbd"></div>
<div class="abs" style="left:130px;top:590px;width:659px;height:1px;background:#bdbdbd"></div>
<div class="abs" style="left:130px;top:605px;width:659px;height:1px;background:#bdbdbd"></div>
<div class="abs" style="left:130px;top:619px;width:659px;height:1px;background:#bdbdbd"></div>
<div class="abs" style="left:130px;top:335px;width:1px;height:283px;background:#bdbdbd"></div>
<div class="abs" style="left:175px;top:335px;width:1px;height:283px;background:#bdbdbd"></div>
<div class="abs" style="left:229px;top:335px;width:1px;height:283px;background:#bdbdbd"></div>
<div class="abs" style="left:275px;top:335px;width:1px;height:283px;background:#bdbdbd"></div>
<div class="abs" style="left:329px;top:335px;width:1px;height:283px;background:#bdbdbd"></div>
<div class="abs" style="left:399px;top:335px;width:1px;height:283px;background:#bdbdbd"></div>
<div class="abs" style="left:452px;top:335px;width:1px;height:283px;background:#bdbdbd"></div>
<div class="abs" style="left:524px;top:350px;width:1px;height:268px;background:#bdbdbd"></div>
<div class="abs" style="left:569px;top:350px;width:1px;height:268px;background:#bdbdbd"></div>
<div class="abs" style="left:593px;top:350px;width:1px;height:268px;background:#bdbdbd"></div>
<div class="abs" style="left:634px;top:350px;width:1px;height:268px;background:#bdbdbd"></div>
<div class="abs" style="left:700px;top:350px;width:1px;height:268px;background:#bdbdbd"></div>
<div class="abs" style="left:743px;top:350px;width:1px;height:268px;background:#bdbdbd"></div>
<div class="abs" style="left:788px;top:335px;width:1px;height:283px;background:#bdbdbd"></div>
<div class="t " style="left:133.00px;top:335.60px;font-size:10.6px;line-height:14.84px;font-weight:bold;font-style:normal;color:#111;"><span class="ab">Series</span></div>
<div class="t " style="left:177.40px;top:335.60px;font-size:10.6px;line-height:14.84px;font-weight:bold;font-style:normal;color:#111;"><span class="ab">Number</span></div>
<div class="t " style="left:232.00px;top:335.60px;font-size:10.6px;line-height:14.84px;font-weight:bold;font-style:normal;color:#111;"><span class="ab">Status</span></div>
<div class="t " style="left:277.10px;top:335.60px;font-size:10.6px;line-height:14.84px;font-weight:bold;font-style:normal;color:#111;"><span class="ab">Batch</span></div>
<div class="t " style="left:331.10px;top:335.60px;font-size:10.6px;line-height:14.84px;font-weight:bold;font-style:normal;color:#111;"><span class="ab">DateOn</span></div>
<div class="t " style="left:401.60px;top:335.60px;font-size:10.6px;line-height:14.84px;font-weight:bold;font-style:normal;color:#111;"><span class="ab">DateOff</span></div>
<div class="t " style="left:454.60px;top:350.40px;font-size:10.6px;line-height:14.84px;font-weight:bold;font-style:normal;color:#111;"><span class="ab">Date</span></div>
<div class="t " style="left:526.30px;top:350.40px;font-size:10.6px;line-height:14.84px;font-weight:bold;font-style:normal;color:#111;"><span class="ab">Status</span></div>
<div class="t " style="left:571.30px;top:350.40px;font-size:10.6px;line-height:14.84px;font-weight:bold;font-style:normal;color:#111;"><span class="ab">Livery</span></div>
<div class="t " style="left:596.00px;top:350.40px;font-size:10.6px;line-height:14.84px;font-weight:bold;font-style:normal;color:#111;"><span class="ab">Pool</span></div>
<div class="t " style="left:636.60px;top:350.40px;font-size:10.6px;line-height:14.84px;font-weight:bold;font-style:normal;color:#111;"><span class="ab">Design</span></div>
<div class="t " style="left:702.40px;top:350.40px;font-size:10.6px;line-height:14.84px;font-weight:bold;font-style:normal;color:#111;"><span class="ab">TOPS</span></div>
<div class="t " style="left:745.20px;top:350.40px;font-size:10.6px;line-height:14.84px;font-weight:bold;font-style:normal;color:#111;"><span class="ab">Alloc</span></div>
<svg class="abs" style="left:133.3px;top:352px" width="10" height="14" viewBox="0 0 10 14"><path d="M3,0.5 H7 V9 H9.5 L5,13.5 L0.5,9 H3 Z" fill="#66c466"/></svg>
<svg class="abs" style="left:146.8px;top:353.5px" width="9" height="12" viewBox="0 0 9 12"><path d="M4,0 L8,4 H6 V11.5 H2 V4 H0 Z" fill="#ffb4b4"/></svg>
<svg class="abs" style="left:177.70000000000002px;top:352px" width="10" height="14" viewBox="0 0 10 14"><path d="M3,0.5 H7 V9 H9.5 L5,13.5 L0.5,9 H3 Z" fill="#ffb4b4"/></svg>
<svg class="abs" style="left:191.20000000000002px;top:353.5px" width="9" height="12" viewBox="0 0 9 12"><path d="M4,0 L8,4 H6 V11.5 H2 V4 H0 Z" fill="#ffb4b4"/></svg>
<svg class="abs" style="left:331.40000000000003px;top:352px" width="10" height="14" viewBox="0 0 10 14"><path d="M3,0.5 H7 V9 H9.5 L5,13.5 L0.5,9 H3 Z" fill="#ffb4b4"/></svg>
<svg class="abs" style="left:344.90000000000003px;top:353.5px" width="9" height="12" viewBox="0 0 9 12"><path d="M4,0 L8,4 H6 V11.5 H2 V4 H0 Z" fill="#ffb4b4"/></svg>
<svg class="abs" style="left:401.90000000000003px;top:352px" width="10" height="14" viewBox="0 0 10 14"><path d="M3,0.5 H7 V9 H9.5 L5,13.5 L0.5,9 H3 Z" fill="#ffb4b4"/></svg>
<svg class="abs" style="left:415.40000000000003px;top:353.5px" width="9" height="12" viewBox="0 0 9 12"><path d="M4,0 L8,4 H6 V11.5 H2 V4 H0 Z" fill="#ffb4b4"/></svg>
<div class="t " style="left:133.00px;top:369.60px;font-size:10.6px;line-height:14.84px;font-weight:normal;font-style:normal;color:#404040;"><span class="ab">CB</span></div>
<div class="t " style="left:177.60px;top:369.60px;font-size:10.6px;line-height:14.84px;font-weight:normal;font-style:normal;color:#404040;"><span class="a" style="font-weight:bold">1</span></div>
<div class="t " style="left:252.55px;top:369.60px;font-size:10.6px;line-height:14.84px;font-weight:normal;font-style:normal;color:#404040;transform:translateX(-50%);"><span class="ab">Y</span></div>
<div class="t " style="left:277.30px;top:369.60px;font-size:10.6px;line-height:14.84px;font-weight:normal;font-style:normal;color:#404040;"><span class="a">1-11</span></div>
<div class="t " style="left:397.40px;top:369.60px;font-size:10.6px;line-height:14.84px;font-weight:normal;font-style:normal;color:#404040;transform:translateX(-100%);">1951</div>
<div class="t " style="left:133.00px;top:384.33px;font-size:10.6px;line-height:14.84px;font-weight:normal;font-style:normal;color:#404040;"><span class="ab">CB</span></div>
<div class="t " style="left:177.60px;top:384.33px;font-size:10.6px;line-height:14.84px;font-weight:normal;font-style:normal;color:#404040;"><span class="a" style="font-weight:bold">2</span></div>
<div class="t " style="left:252.55px;top:384.33px;font-size:10.6px;line-height:14.84px;font-weight:normal;font-style:normal;color:#404040;transform:translateX(-50%);"><span class="ab">Y</span></div>
<div class="t " style="left:277.30px;top:384.33px;font-size:10.6px;line-height:14.84px;font-weight:normal;font-style:normal;color:#404040;"><span class="a">1-11</span></div>
<div class="t " style="left:397.40px;top:384.33px;font-size:10.6px;line-height:14.84px;font-weight:normal;font-style:normal;color:#404040;transform:translateX(-100%);">1951</div>
<div class="t " style="left:133.00px;top:399.05px;font-size:10.6px;line-height:14.84px;font-weight:normal;font-style:normal;color:#404040;"><span class="ab">CB</span></div>
<div class="t " style="left:177.60px;top:399.05px;font-size:10.6px;line-height:14.84px;font-weight:normal;font-style:normal;color:#404040;"><span class="a" style="font-weight:bold">3</span></div>
<div class="t " style="left:252.55px;top:399.05px;font-size:10.6px;line-height:14.84px;font-weight:normal;font-style:normal;color:#404040;transform:translateX(-50%);"><span class="ab">R</span></div>
<div class="t " style="left:277.30px;top:399.05px;font-size:10.6px;line-height:14.84px;font-weight:normal;font-style:normal;color:#404040;"><span class="a">1-11</span></div>
<div class="t " style="left:397.40px;top:399.05px;font-size:10.6px;line-height:14.84px;font-weight:normal;font-style:normal;color:#404040;transform:translateX(-100%);">1951</div>
<div class="t " style="left:450.00px;top:399.05px;font-size:10.6px;line-height:14.84px;font-weight:normal;font-style:normal;color:#404040;transform:translateX(-100%);">1964</div>
<div class="t " style="left:133.00px;top:413.78px;font-size:10.6px;line-height:14.84px;font-weight:normal;font-style:normal;color:#404040;"><span class="ab">CB</span></div>
<div class="t " style="left:177.60px;top:413.78px;font-size:10.6px;line-height:14.84px;font-weight:normal;font-style:normal;color:#404040;"><span class="a" style="font-weight:bold">4</span></div>
<div class="t " style="left:252.55px;top:413.78px;font-size:10.6px;line-height:14.84px;font-weight:normal;font-style:normal;color:#404040;transform:translateX(-50%);"><span class="ab">R</span></div>
<div class="t " style="left:277.30px;top:413.78px;font-size:10.6px;line-height:14.84px;font-weight:normal;font-style:normal;color:#404040;"><span class="a">1-11</span></div>
<div class="t " style="left:397.40px;top:413.78px;font-size:10.6px;line-height:14.84px;font-weight:normal;font-style:normal;color:#404040;transform:translateX(-100%);">1951</div>
<div class="t " style="left:450.00px;top:413.78px;font-size:10.6px;line-height:14.84px;font-weight:normal;font-style:normal;color:#404040;transform:translateX(-100%);">1978</div>
<div class="t " style="left:133.00px;top:428.50px;font-size:10.6px;line-height:14.84px;font-weight:normal;font-style:normal;color:#404040;"><span class="ab">CB</span></div>
<div class="t " style="left:177.60px;top:428.50px;font-size:10.6px;line-height:14.84px;font-weight:normal;font-style:normal;color:#404040;"><span class="a" style="font-weight:bold">5</span></div>
<div class="t " style="left:252.55px;top:428.50px;font-size:10.6px;line-height:14.84px;font-weight:normal;font-style:normal;color:#404040;transform:translateX(-50%);"><span class="ab">Y</span></div>
<div class="t " style="left:277.30px;top:428.50px;font-size:10.6px;line-height:14.84px;font-weight:normal;font-style:normal;color:#404040;"><span class="a">1-11</span></div>
<div class="t " style="left:397.40px;top:428.50px;font-size:10.6px;line-height:14.84px;font-weight:normal;font-style:normal;color:#404040;transform:translateX(-100%);">1951</div>
<div class="t " style="left:133.00px;top:443.23px;font-size:10.6px;line-height:14.84px;font-weight:normal;font-style:normal;color:#404040;"><span class="ab">CB</span></div>
<div class="t " style="left:177.60px;top:443.23px;font-size:10.6px;line-height:14.84px;font-weight:normal;font-style:normal;color:#404040;"><span class="a" style="font-weight:bold">6</span></div>
<div class="t " style="left:252.55px;top:443.23px;font-size:10.6px;line-height:14.84px;font-weight:normal;font-style:normal;color:#404040;transform:translateX(-50%);"><span class="ab">Y</span></div>
<div class="t " style="left:277.30px;top:443.23px;font-size:10.6px;line-height:14.84px;font-weight:normal;font-style:normal;color:#404040;"><span class="a">1-11</span></div>
<div class="t " style="left:397.40px;top:443.23px;font-size:10.6px;line-height:14.84px;font-weight:normal;font-style:normal;color:#404040;transform:translateX(-100%);">1951</div>
<div class="t " style="left:133.00px;top:457.95px;font-size:10.6px;line-height:14.84px;font-weight:normal;font-style:normal;color:#404040;"><span class="ab">CB</span></div>
<div class="t " style="left:177.60px;top:457.95px;font-size:10.6px;line-height:14.84px;font-weight:normal;font-style:normal;color:#404040;"><span class="a" style="font-weight:bold">7</span></div>
<div class="t " style="left:252.55px;top:457.95px;font-size:10.6px;line-height:14.84px;font-weight:normal;font-style:normal;color:#404040;transform:translateX(-50%);"><span class="ab">Y</span></div>
<div class="t " style="left:277.30px;top:457.95px;font-size:10.6px;line-height:14.84px;font-weight:normal;font-style:normal;color:#404040;"><span class="a">1-11</span></div>
<div class="t " style="left:397.40px;top:457.95px;font-size:10.6px;line-height:14.84px;font-weight:normal;font-style:normal;color:#404040;transform:translateX(-100%);">1951</div>
<div class="t " style="left:133.00px;top:472.68px;font-size:10.6px;line-height:14.84px;font-weight:normal;font-style:normal;color:#404040;"><span class="ab">CB</span></div>
<div class="t " style="left:177.60px;top:472.68px;font-size:10.6px;line-height:14.84px;font-weight:normal;font-style:normal;color:#404040;"><span class="a" style="font-weight:bold">8</span></div>
<div class="t " style="left:252.55px;top:472.68px;font-size:10.6px;line-height:14.84px;font-weight:normal;font-style:normal;color:#404040;transform:translateX(-50%);"><span class="ab">Y</span></div>
<div class="t " style="left:277.30px;top:472.68px;font-size:10.6px;line-height:14.84px;font-weight:normal;font-style:normal;color:#404040;"><span class="a">1-11</span></div>
<div class="t " style="left:397.40px;top:472.68px;font-size:10.6px;line-height:14.84px;font-weight:normal;font-style:normal;color:#404040;transform:translateX(-100%);">1951</div>
<div class="t " style="left:133.00px;top:487.40px;font-size:10.6px;line-height:14.84px;font-weight:normal;font-style:normal;color:#404040;"><span class="ab">CB</span></div>
<div class="t " style="left:177.60px;top:487.40px;font-size:10.6px;line-height:14.84px;font-weight:normal;font-style:normal;color:#404040;"><span class="a" style="font-weight:bold">9</span></div>
<div class="t " style="left:252.55px;top:487.40px;font-size:10.6px;line-height:14.84px;font-weight:normal;font-style:normal;color:#404040;transform:translateX(-50%);"><span class="ab">Y</span></div>
<div class="t " style="left:277.30px;top:487.40px;font-size:10.6px;line-height:14.84px;font-weight:normal;font-style:normal;color:#404040;"><span class="a">1-11</span></div>
<div class="t " style="left:397.40px;top:487.40px;font-size:10.6px;line-height:14.84px;font-weight:normal;font-style:normal;color:#404040;transform:translateX(-100%);">1951</div>
<div class="t " style="left:133.00px;top:502.13px;font-size:10.6px;line-height:14.84px;font-weight:normal;font-style:normal;color:#404040;"><span class="ab">CB</span></div>
<div class="t " style="left:177.60px;top:502.13px;font-size:10.6px;line-height:14.84px;font-weight:normal;font-style:normal;color:#404040;"><span class="a" style="font-weight:bold">10</span></div>
<div class="t " style="left:252.55px;top:502.13px;font-size:10.6px;line-height:14.84px;font-weight:normal;font-style:normal;color:#404040;transform:translateX(-50%);"><span class="ab">Y</span></div>
<div class="t " style="left:277.30px;top:502.13px;font-size:10.6px;line-height:14.84px;font-weight:normal;font-style:normal;color:#404040;"><span class="a">1-11</span></div>
<div class="t " style="left:397.40px;top:502.13px;font-size:10.6px;line-height:14.84px;font-weight:normal;font-style:normal;color:#404040;transform:translateX(-100%);">1951</div>
<div class="t " style="left:133.00px;top:516.85px;font-size:10.6px;line-height:14.84px;font-weight:normal;font-style:normal;color:#404040;"><span class="ab">CB</span></div>
<div class="t " style="left:177.60px;top:516.85px;font-size:10.6px;line-height:14.84px;font-weight:normal;font-style:normal;color:#404040;"><span class="a" style="font-weight:bold">11</span></div>
<div class="t " style="left:252.55px;top:516.85px;font-size:10.6px;line-height:14.84px;font-weight:normal;font-style:normal;color:#404040;transform:translateX(-50%);"><span class="ab">Y</span></div>
<div class="t " style="left:277.30px;top:516.85px;font-size:10.6px;line-height:14.84px;font-weight:normal;font-style:normal;color:#404040;"><span class="a">1-11</span></div>
<div class="t " style="left:397.40px;top:516.85px;font-size:10.6px;line-height:14.84px;font-weight:normal;font-style:normal;color:#404040;transform:translateX(-100%);">1951</div>
<div class="t " style="left:133.00px;top:531.58px;font-size:10.6px;line-height:14.84px;font-weight:normal;font-style:normal;color:#404040;"><span class="ab">CB</span></div>
<div class="t " style="left:177.60px;top:531.58px;font-size:10.6px;line-height:14.84px;font-weight:normal;font-style:normal;color:#404040;"><span class="a" style="font-weight:bold">121</span></div>
<div class="t " style="left:252.55px;top:531.58px;font-size:10.6px;line-height:14.84px;font-weight:normal;font-style:normal;color:#404040;transform:translateX(-50%);"><span class="ab">Y</span></div>
<div class="t " style="left:277.30px;top:531.58px;font-size:10.6px;line-height:14.84px;font-weight:normal;font-style:normal;color:#404040;"><span class="a">121-129</span></div>
<div class="t " style="left:397.40px;top:531.58px;font-size:10.6px;line-height:14.84px;font-weight:normal;font-style:normal;color:#404040;transform:translateX(-100%);">1989</div>
<div class="t " style="left:522.30px;top:531.58px;font-size:10.6px;line-height:14.84px;font-weight:normal;font-style:normal;color:#404040;transform:translateX(-100%);">05/2000</div>
<div class="t " style="left:546.80px;top:531.58px;font-size:10.6px;line-height:14.84px;font-weight:normal;font-style:normal;color:#404040;transform:translateX(-50%);"><span class="ab">W</span></div>
<div class="t " style="left:636.60px;top:531.58px;font-size:10.6px;line-height:14.84px;font-weight:normal;font-style:normal;color:#404040;"><span class="a">EA265.0A</span></div>
<div class="t " style="left:702.40px;top:531.58px;font-size:10.6px;line-height:14.84px;font-weight:normal;font-style:normal;color:#404040;"><span class="a">SAXH</span></div>
<div class="t " style="left:745.20px;top:531.58px;font-size:10.6px;line-height:14.84px;font-weight:normal;font-style:normal;color:#404040;"><span class="a">ZQ</span></div>
<div class="t " style="left:133.00px;top:546.30px;font-size:10.6px;line-height:14.84px;font-weight:normal;font-style:normal;color:#404040;"><span class="ab">CB</span></div>
<div class="t " style="left:177.60px;top:546.30px;font-size:10.6px;line-height:14.84px;font-weight:normal;font-style:normal;color:#404040;"><span class="a" style="font-weight:bold">122</span></div>
<div class="t " style="left:252.55px;top:546.30px;font-size:10.6px;line-height:14.84px;font-weight:normal;font-style:normal;color:#404040;transform:translateX(-50%);"><span class="ab">S</span></div>
<div class="t " style="left:277.30px;top:546.30px;font-size:10.6px;line-height:14.84px;font-weight:normal;font-style:normal;color:#404040;"><span class="a">121-129</span></div>
<div class="t " style="left:397.40px;top:546.30px;font-size:10.6px;line-height:14.84px;font-weight:normal;font-style:normal;color:#404040;transform:translateX(-100%);">1989</div>
<div class="t " style="left:522.30px;top:546.30px;font-size:10.6px;line-height:14.84px;font-weight:normal;font-style:normal;color:#404040;transform:translateX(-100%);">01/01/2019</div>
<div class="t " style="left:546.80px;top:546.30px;font-size:10.6px;line-height:14.84px;font-weight:normal;font-style:normal;color:#404040;transform:translateX(-50%);"><span class="ab">S</span></div>
<div class="t " style="left:595.50px;top:546.30px;font-size:10.6px;line-height:14.84px;font-weight:normal;font-style:normal;color:#404040;"><span class="a">483</span></div>
<div class="t " style="left:745.20px;top:546.30px;font-size:10.6px;line-height:14.84px;font-weight:normal;font-style:normal;color:#404040;"><span class="a">RY</span></div>
<div class="t " style="left:133.00px;top:561.03px;font-size:10.6px;line-height:14.84px;font-weight:normal;font-style:normal;color:#404040;"><span class="ab">CB</span></div>
<div class="t " style="left:177.60px;top:561.03px;font-size:10.6px;line-height:14.84px;font-weight:normal;font-style:normal;color:#404040;"><span class="a" style="font-weight:bold">123</span></div>
<div class="t " style="left:252.55px;top:561.03px;font-size:10.6px;line-height:14.84px;font-weight:normal;font-style:normal;color:#404040;transform:translateX(-50%);"><span class="ab">Y</span></div>
<div class="t " style="left:277.30px;top:561.03px;font-size:10.6px;line-height:14.84px;font-weight:normal;font-style:normal;color:#404040;"><span class="a">121-129</span></div>
<div class="t " style="left:397.40px;top:561.03px;font-size:10.6px;line-height:14.84px;font-weight:normal;font-style:normal;color:#404040;transform:translateX(-100%);">1989</div>
<div class="t " style="left:522.30px;top:561.03px;font-size:10.6px;line-height:14.84px;font-weight:normal;font-style:normal;color:#404040;transform:translateX(-100%);">05/2000</div>
<div class="t " style="left:546.80px;top:561.03px;font-size:10.6px;line-height:14.84px;font-weight:normal;font-style:normal;color:#404040;transform:translateX(-50%);"><span class="ab">S</span></div>
<div class="t " style="left:636.60px;top:561.03px;font-size:10.6px;line-height:14.84px;font-weight:normal;font-style:normal;color:#404040;"><span class="a">EA265.0A</span></div>
<div class="t " style="left:702.40px;top:561.03px;font-size:10.6px;line-height:14.84px;font-weight:normal;font-style:normal;color:#404040;"><span class="a">SAXH</span></div>
<div class="t " style="left:745.20px;top:561.03px;font-size:10.6px;line-height:14.84px;font-weight:normal;font-style:normal;color:#404040;"><span class="a">HQ</span></div>
<div class="t " style="left:133.00px;top:575.75px;font-size:10.6px;line-height:14.84px;font-weight:normal;font-style:normal;color:#404040;"><span class="ab">CB</span></div>
<div class="t " style="left:177.60px;top:575.75px;font-size:10.6px;line-height:14.84px;font-weight:normal;font-style:normal;color:#404040;"><span class="a" style="font-weight:bold">124</span></div>
<div class="t " style="left:252.55px;top:575.75px;font-size:10.6px;line-height:14.84px;font-weight:normal;font-style:normal;color:#404040;transform:translateX(-50%);"><span class="ab">A</span></div>
<div class="t " style="left:277.30px;top:575.75px;font-size:10.6px;line-height:14.84px;font-weight:normal;font-style:normal;color:#404040;"><span class="a">121-129</span></div>
<div class="t " style="left:397.40px;top:575.75px;font-size:10.6px;line-height:14.84px;font-weight:normal;font-style:normal;color:#404040;transform:translateX(-100%);">1989</div>
<div class="t " style="left:522.30px;top:575.75px;font-size:10.6px;line-height:14.84px;font-weight:normal;font-style:normal;color:#404040;transform:translateX(-100%);">01/01/2019</div>
<div class="t " style="left:546.80px;top:575.75px;font-size:10.6px;line-height:14.84px;font-weight:normal;font-style:normal;color:#404040;transform:translateX(-50%);"><span class="ab">A</span></div>
<div class="t " style="left:595.50px;top:575.75px;font-size:10.6px;line-height:14.84px;font-weight:normal;font-style:normal;color:#404040;"><span class="a">483</span></div>
<div class="t " style="left:745.20px;top:575.75px;font-size:10.6px;line-height:14.84px;font-weight:normal;font-style:normal;color:#404040;"><span class="a">RY</span></div>
<div class="t " style="left:133.00px;top:590.48px;font-size:10.6px;line-height:14.84px;font-weight:normal;font-style:normal;color:#404040;"><span class="ab">CB</span></div>
<div class="t " style="left:177.60px;top:590.48px;font-size:10.6px;line-height:14.84px;font-weight:normal;font-style:normal;color:#404040;"><span class="a" style="font-weight:bold">125</span></div>
<div class="t " style="left:252.55px;top:590.48px;font-size:10.6px;line-height:14.84px;font-weight:normal;font-style:normal;color:#404040;transform:translateX(-50%);"><span class="ab">Y</span></div>
<div class="t " style="left:277.30px;top:590.48px;font-size:10.6px;line-height:14.84px;font-weight:normal;font-style:normal;color:#404040;"><span class="a">121-129</span></div>
<div class="t " style="left:397.40px;top:590.48px;font-size:10.6px;line-height:14.84px;font-weight:normal;font-style:normal;color:#404040;transform:translateX(-100%);">1989</div>
<div class="t " style="left:522.30px;top:590.48px;font-size:10.6px;line-height:14.84px;font-weight:normal;font-style:normal;color:#404040;transform:translateX(-100%);">05/2000</div>
<div class="t " style="left:546.80px;top:590.48px;font-size:10.6px;line-height:14.84px;font-weight:normal;font-style:normal;color:#404040;transform:translateX(-50%);"><span class="ab">W</span></div>
<div class="t " style="left:636.60px;top:590.48px;font-size:10.6px;line-height:14.84px;font-weight:normal;font-style:normal;color:#404040;"><span class="a">EA265.0A</span></div>
<div class="t " style="left:702.40px;top:590.48px;font-size:10.6px;line-height:14.84px;font-weight:normal;font-style:normal;color:#404040;"><span class="a">SAXH</span></div>
<div class="t " style="left:745.20px;top:590.48px;font-size:10.6px;line-height:14.84px;font-weight:normal;font-style:normal;color:#404040;"><span class="a">ZQ</span></div>
<div class="t " style="left:133.00px;top:605.20px;font-size:10.6px;line-height:14.84px;font-weight:normal;font-style:normal;color:#404040;"><span class="ab">CB</span></div>
<div class="t " style="left:177.60px;top:605.20px;font-size:10.6px;line-height:14.84px;font-weight:normal;font-style:normal;color:#404040;"><span class="a" style="font-weight:bold">126</span></div>
<div class="t " style="left:252.55px;top:605.20px;font-size:10.6px;line-height:14.84px;font-weight:normal;font-style:normal;color:#404040;transform:translateX(-50%);"><span class="ab">A</span></div>
<div class="t " style="left:277.30px;top:605.20px;font-size:10.6px;line-height:14.84px;font-weight:normal;font-style:normal;color:#404040;"><span class="a">121-129</span></div>
<div class="t " style="left:397.40px;top:605.20px;font-size:10.6px;line-height:14.84px;font-weight:normal;font-style:normal;color:#404040;transform:translateX(-100%);">1989</div>
<div class="t " style="left:522.30px;top:605.20px;font-size:10.6px;line-height:14.84px;font-weight:normal;font-style:normal;color:#404040;transform:translateX(-100%);">01/01/2019</div>
<div class="t " style="left:546.80px;top:605.20px;font-size:10.6px;line-height:14.84px;font-weight:normal;font-style:normal;color:#404040;transform:translateX(-50%);"><span class="ab">A</span></div>
<div class="t " style="left:595.50px;top:605.20px;font-size:10.6px;line-height:14.84px;font-weight:normal;font-style:normal;color:#404040;"><span class="a">483</span></div>
<div class="t " style="left:745.20px;top:605.20px;font-size:10.6px;line-height:14.84px;font-weight:normal;font-style:normal;color:#404040;"><span class="a">RY</span></div>
<div class="abs" style="left:548.2px;top:268.6px;width:214.29999999999995px;height:220.39999999999998px;background:#fff;border-left:1px solid #777;border-bottom:1px solid #c8c8c8;box-shadow:1px 1px 1px rgba(0,0,0,0.12);overflow:hidden">
<div class="abs" style="left:0;top:0.10px;width:203.5px;height:10.6px;color:#444;"></div>
<div class="t " style="left:2.20px;top:0.08px;font-size:9px;line-height:12.6px;font-weight:normal;font-style:normal;color:#444;letter-spacing:-0.05px;">988 (357228 &gt; 373015)</div>
<div class="abs" style="left:0;top:11.10px;width:203.5px;height:10.6px;color:#444;"></div>
<div class="t " style="left:2.20px;top:11.08px;font-size:9px;line-height:12.6px;font-weight:normal;font-style:normal;color:#444;letter-spacing:-0.05px;">989 (373016 &gt; 375305)</div>
<div class="abs" style="left:0;top:22.10px;width:203.5px;height:10.6px;color:#444;"></div>
<div class="t " style="left:2.20px;top:22.08px;font-size:9px;line-height:12.6px;font-weight:normal;font-style:normal;color:#444;letter-spacing:-0.05px;">990 (375306 &gt; 375822)</div>
<div class="abs" style="left:0;top:33.10px;width:203.5px;height:10.6px;color:#444;"></div>
<div class="t " style="left:2.20px;top:33.08px;font-size:9px;line-height:12.6px;font-weight:normal;font-style:normal;color:#444;letter-spacing:-0.05px;">991 (375823 &gt; 377129)</div>
<div class="abs" style="left:0;top:44.10px;width:203.5px;height:10.6px;color:#444;"></div>
<div class="t " style="left:2.20px;top:44.08px;font-size:9px;line-height:12.6px;font-weight:normal;font-style:normal;color:#444;letter-spacing:-0.05px;">992 (377130 &gt; 377421)</div>
<div class="abs" style="left:0;top:55.10px;width:203.5px;height:10.6px;color:#444;"></div>
<div class="t " style="left:2.20px;top:55.08px;font-size:9px;line-height:12.6px;font-weight:normal;font-style:normal;color:#444;letter-spacing:-0.05px;">993 (377422 &gt; 377623)</div>
<div class="abs" style="left:0;top:66.10px;width:203.5px;height:10.6px;color:#444;"></div>
<div class="t " style="left:2.20px;top:66.08px;font-size:9px;line-height:12.6px;font-weight:normal;font-style:normal;color:#444;letter-spacing:-0.05px;">994 (377624 &gt; 379008)</div>
<div class="abs" style="left:0;top:77.10px;width:203.5px;height:10.6px;color:#444;"></div>
<div class="t " style="left:2.20px;top:77.08px;font-size:9px;line-height:12.6px;font-weight:normal;font-style:normal;color:#444;letter-spacing:-0.05px;">995 (379009 &gt; 385040)</div>
<div class="abs" style="left:0;top:88.10px;width:203.5px;height:10.6px;color:#444;"></div>
<div class="t " style="left:2.20px;top:88.08px;font-size:9px;line-height:12.6px;font-weight:normal;font-style:normal;color:#444;letter-spacing:-0.05px;">996 (385041 &gt; 387170)</div>
<div class="abs" style="left:0;top:99.10px;width:203.5px;height:10.6px;color:#444;"></div>
<div class="t " style="left:2.20px;top:99.08px;font-size:9px;line-height:12.6px;font-weight:normal;font-style:normal;color:#444;letter-spacing:-0.05px;">997 (387171 &gt; 390121)</div>
<div class="abs" style="left:0;top:110.10px;width:203.5px;height:10.6px;color:#444;"></div>
<div class="t " style="left:2.20px;top:110.08px;font-size:9px;line-height:12.6px;font-weight:normal;font-style:normal;color:#444;letter-spacing:-0.05px;">998 (390122 &gt; 398034)</div>
<div class="abs" style="left:0;top:121.10px;width:203.5px;height:10.6px;color:#444;"></div>
<div class="t " style="left:2.20px;top:121.08px;font-size:9px;line-height:12.6px;font-weight:normal;font-style:normal;color:#444;letter-spacing:-0.05px;">999 (398035 &gt; 450021)</div>
<div class="abs" style="left:0;top:132.10px;width:203.5px;height:10.6px;background:#1e7ff0;color:#fff;"></div>
<div class="t " style="left:2.20px;top:132.08px;font-size:9px;line-height:12.6px;font-weight:normal;font-style:normal;color:#fff;letter-spacing:-0.05px;">1000 (450022 &gt; 450093)</div>
<div class="abs" style="left:0;top:143.10px;width:203.5px;height:10.6px;color:#444;"></div>
<div class="t " style="left:2.20px;top:143.08px;font-size:9px;line-height:12.6px;font-weight:normal;font-style:normal;color:#444;letter-spacing:-0.05px;">1001 (450094 &gt; 455838)</div>
<div class="abs" style="left:0;top:154.10px;width:203.5px;height:10.6px;color:#444;"></div>
<div class="t " style="left:2.20px;top:154.08px;font-size:9px;line-height:12.6px;font-weight:normal;font-style:normal;color:#444;letter-spacing:-0.05px;">1002 (455839 &gt; 465024)</div>
<div class="abs" style="left:0;top:165.10px;width:203.5px;height:10.6px;color:#444;"></div>
<div class="t " style="left:2.20px;top:165.08px;font-size:9px;line-height:12.6px;font-weight:normal;font-style:normal;color:#444;letter-spacing:-0.05px;">1003 (465025 &gt; 465227)</div>
<div class="abs" style="left:0;top:176.10px;width:203.5px;height:10.6px;color:#444;"></div>
<div class="t " style="left:2.20px;top:176.08px;font-size:9px;line-height:12.6px;font-weight:normal;font-style:normal;color:#444;letter-spacing:-0.05px;">1004 (465228 &gt; 466043)</div>
<div class="abs" style="left:0;top:187.10px;width:203.5px;height:10.6px;color:#444;"></div>
<div class="t " style="left:2.20px;top:187.08px;font-size:9px;line-height:12.6px;font-weight:normal;font-style:normal;color:#444;letter-spacing:-0.05px;">1005 (482501 &gt; 508015)</div>
<div class="abs" style="left:0;top:198.10px;width:203.5px;height:10.6px;color:#444;"></div>
<div class="t " style="left:2.20px;top:198.08px;font-size:9px;line-height:12.6px;font-weight:normal;font-style:normal;color:#444;letter-spacing:-0.05px;">1006 (508016 &gt; 700014)</div>
<div class="abs" style="left:0;top:209.10px;width:203.5px;height:10.6px;color:#444;"></div>
<div class="t " style="left:2.20px;top:209.08px;font-size:9px;line-height:12.6px;font-weight:normal;font-style:normal;color:#444;letter-spacing:-0.05px;">1007 (700015 &gt; 700154)</div>
<div class="abs" style="left:203.6px;top:0;width:10.6px;height:220.39999999999998px;background:#f1f1f1"></div>
<div class="abs" style="left:204.5px;top:78.6px;width:9px;height:10.5px;background:#c1c1c1"></div>
<svg class="abs" style="left:206px;top:3.5px" width="6" height="4"><path d="M0,3.5 L3,0.5 L6,3.5 Z" fill="#505050"/></svg>
<svg class="abs" style="left:206px;top:211.4px" width="6" height="4"><path d="M0,0.5 L3,3.5 L6,0.5 Z" fill="#505050"/></svg>
</div>
<div class="abs" style="left:763px;top:268.6px;width:1px;height:220px;background:#d0d0d0"></div>
<div class="abs" style="left:762.8px;top:368px;width:1.6px;height:56px;background:linear-gradient(#444,#555 60%,rgba(90,90,90,0))"></div>
<svg class="abs" style="left:763px;top:288px" width="5" height="12"><path d="M0,1 L2.6,3 V10.5 H0" fill="none" stroke="#333" stroke-width="1"/><path d="M0,0.5 L2.8,3 L0,3.4 Z" fill="#111"/></svg>
<svg class="abs" style="left:750px;top:240px" width="50" height="45"><ellipse cx="27.8" cy="23.6" rx="20.4" ry="14.4" fill="none" stroke="#ee0000" stroke-width="2"/></svg>
</body></html>
